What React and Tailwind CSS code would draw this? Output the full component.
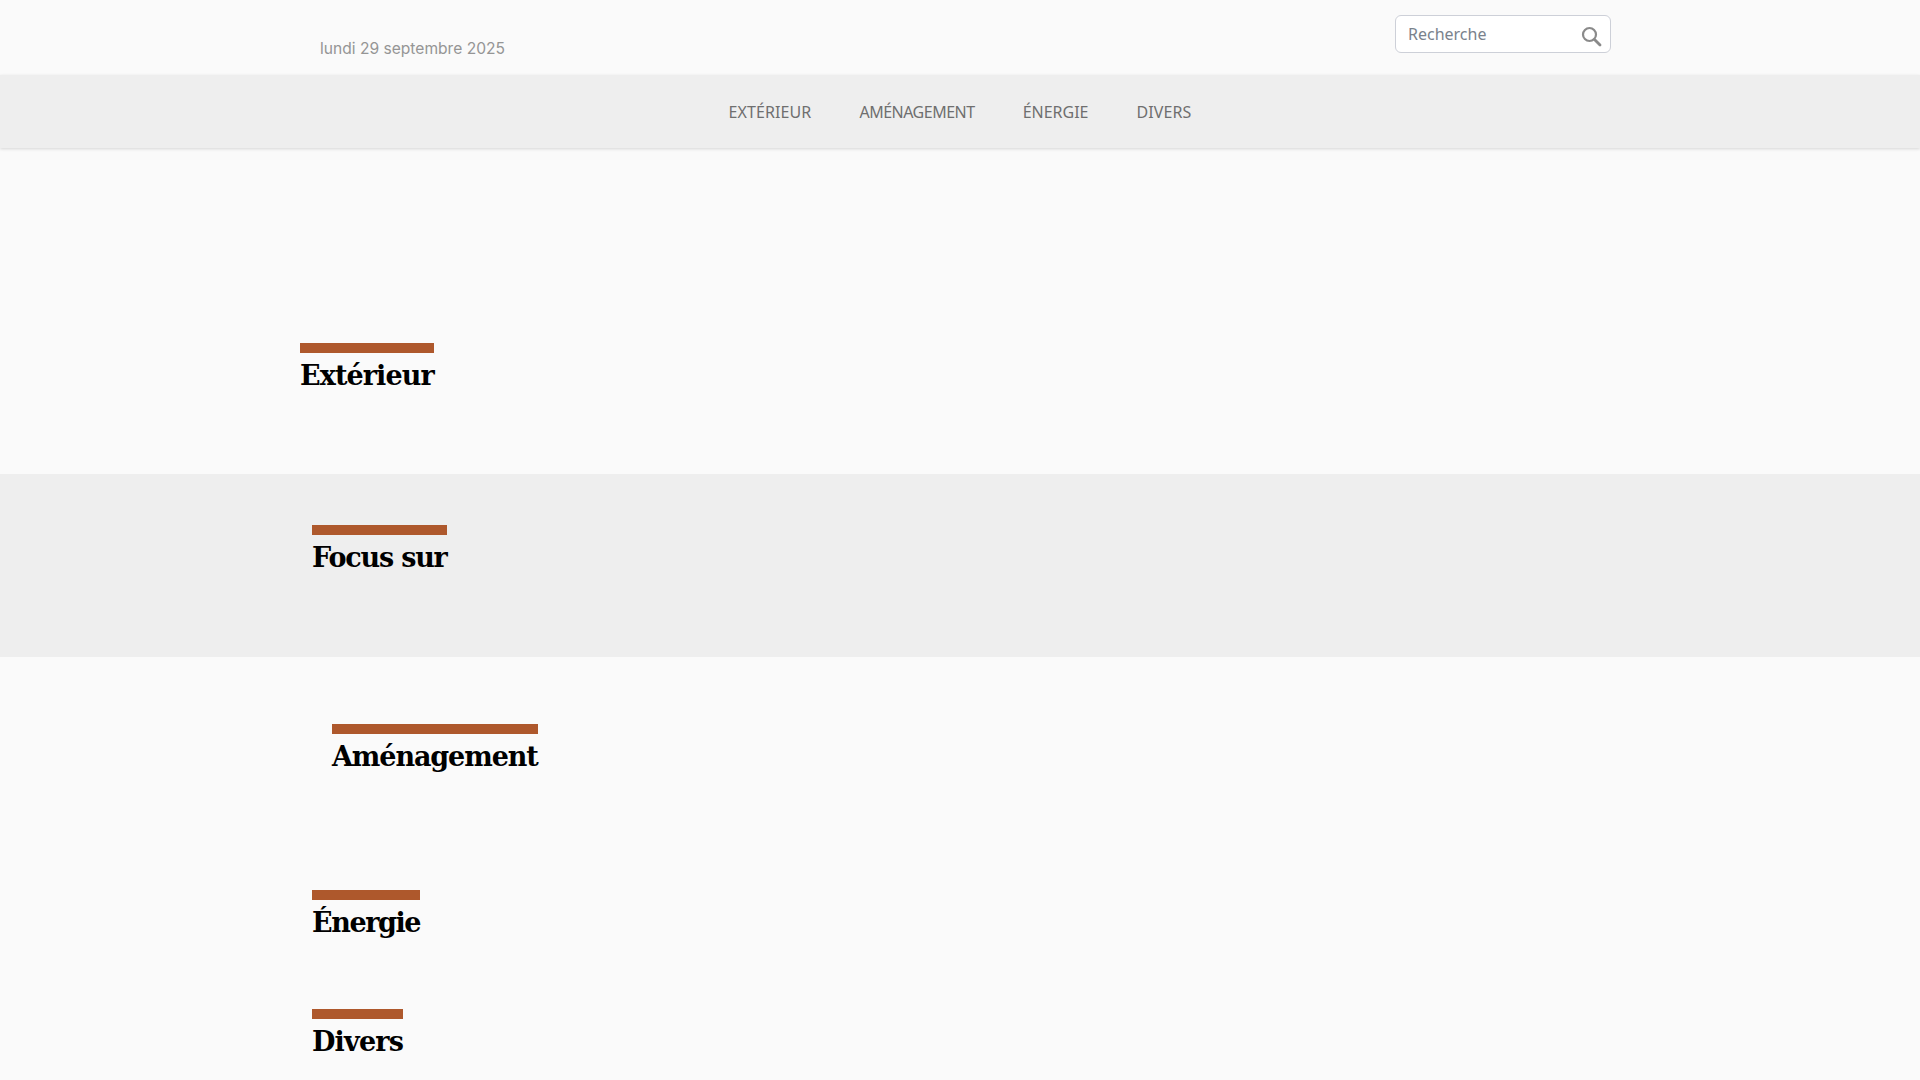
import React from 'react';

const navItems = [
    { label: 'EXTÉRIEUR', cls: 'tracking-[0.1px]' },
    { label: 'AMÉNAGEMENT', cls: 'tracking-[-0.5px]' },
    { label: 'ÉNERGIE', cls: '' },
    { label: 'DIVERS', cls: 'tracking-[0.1px]' },
];

const SectionTitle = ({ children, tracking }) => (
    <div className="w-fit">
        <div className="h-[10px] bg-[#ae582c]"></div>
        <h2 className={`mt-[1px] text-[27px] leading-[44px] font-bold text-black whitespace-nowrap font-['DejaVu_Serif',serif] ${tracking}`}>{children}</h2>
    </div>
);

const App = () => {
    return (
        <div className="h-[1080px] overflow-hidden bg-[#fafafa] font-['Noto_Sans',sans-serif]">
            <header className="h-[75px] flex items-start justify-between pl-[320px] pr-[309px]">
                <div className="pt-[38px] text-[15.6px] leading-[22px] text-[#959595] font-['Inter',sans-serif]">lundi 29 septembre 2025</div>
                <div className="mt-[15px] w-[216px] h-[38px] flex items-center justify-between pl-3 pr-[8px] bg-white border border-[#cdd0d8] rounded-[6px]">
                    <span className="text-[16px] text-[#7a828c]">Recherche</span>
                    <svg className="w-[22px] h-[22px] mt-[3px]" fill="none" viewBox="0 0 22 22" stroke="#8a8a8a">
                        <circle cx="9.5" cy="9.5" r="6.5" strokeWidth="2.2" />
                        <path d="M14.5 14.5 L20 20" strokeWidth="2.8" strokeLinecap="round" />
                    </svg>
                </div>
            </header>

            <nav className="relative h-[73px] bg-[#eeeeee] shadow-[0_1px_3px_rgba(0,0,0,0.15)] flex items-center justify-center gap-[48px]">
                {navItems.map((item) => (
                    <a key={item.label} className={`text-[16px] text-[#6f6f6f] ${item.cls}`}>{item.label}</a>
                ))}
            </nav>

            <section className="h-[326px] pl-[300px] pt-[195px]">
                <SectionTitle tracking="tracking-[-0.9px]">Extérieur</SectionTitle>
            </section>

            <section className="h-[183px] bg-[#eeeeee] pl-[312px] pt-[51px]">
                <SectionTitle tracking="tracking-[-1.2px]">Focus sur</SectionTitle>
            </section>

            <section className="h-[233px] pl-[332px] pt-[67px]">
                <SectionTitle tracking="tracking-[-1.1px]">Aménagement</SectionTitle>
            </section>

            <section className="h-[119px] pl-[312px]">
                <SectionTitle tracking="tracking-[-1.4px]">Énergie</SectionTitle>
            </section>

            <section className="pl-[312px]">
                <SectionTitle tracking="tracking-[-0.8px]">Divers</SectionTitle>
            </section>
        </div>
    );
};

export default App;
